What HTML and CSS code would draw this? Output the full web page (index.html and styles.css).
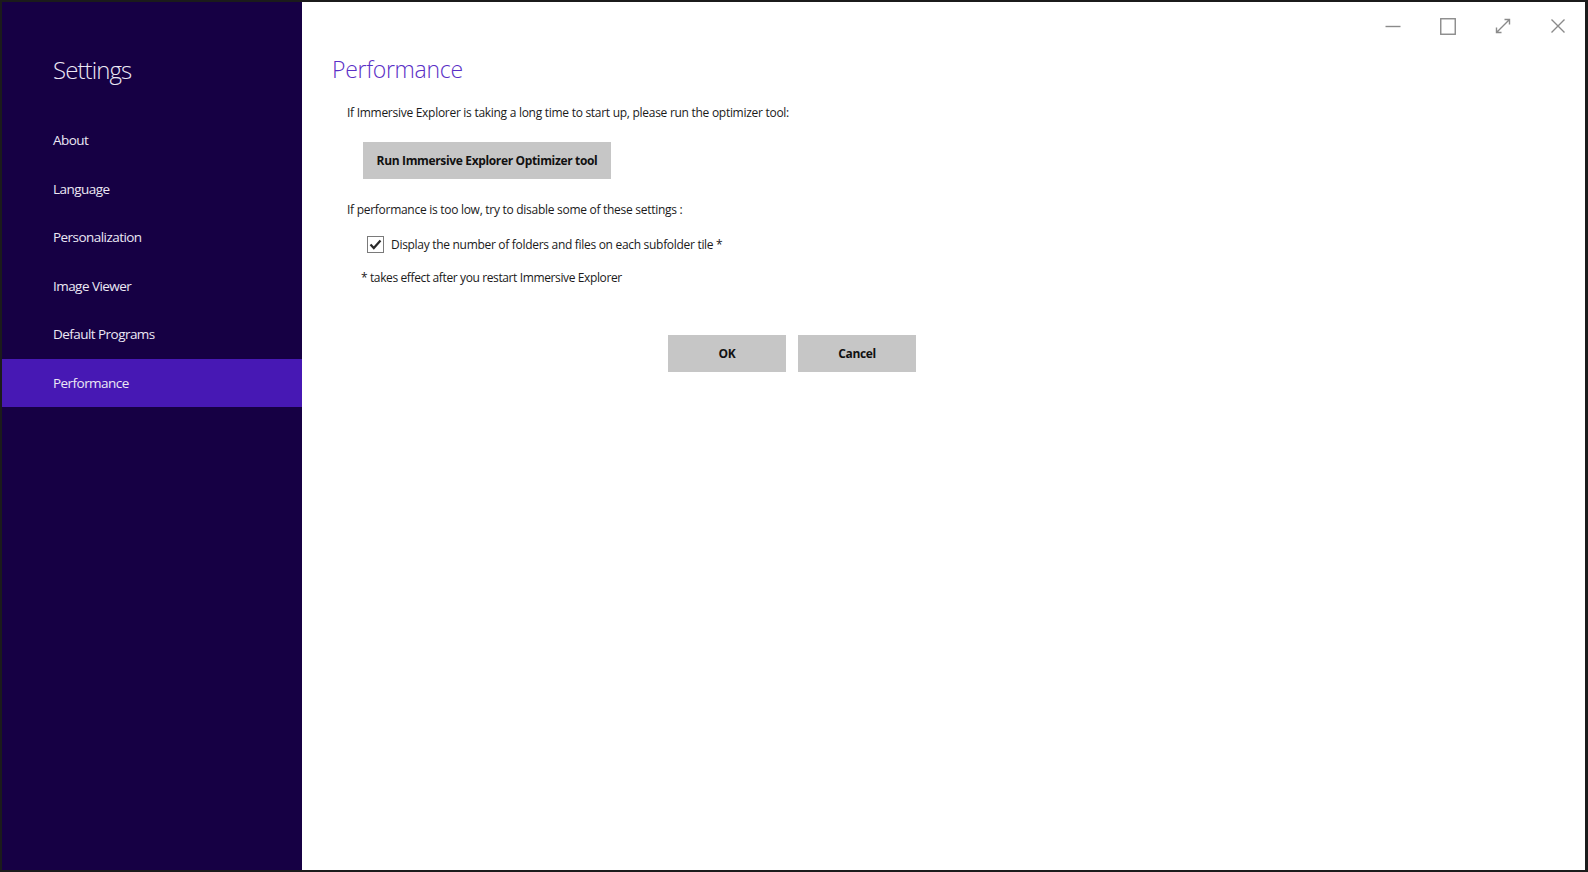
FILE: index.html
```html
<!DOCTYPE html>
<html lang="en">
<head>
    <meta charset="UTF-8">
    <title>Settings</title>
    <link rel="stylesheet" href="styles.css">
</head>
<body>
    <div class="window">
        <aside class="sidebar">
            <h1>Settings</h1>
            <ul class="nav">
                <li>About</li>
                <li>Language</li>
                <li>Personalization</li>
                <li>Image Viewer</li>
                <li>Default Programs</li>
                <li class="active">Performance</li>
            </ul>
        </aside>

        <main class="content">
            <div class="titlebar">
                <button class="ctrl" title="Minimize">
                    <svg width="16" height="16" viewBox="0 0 16 16"><path d="M0.5 8.5H15.5" /></svg>
                </button>
                <button class="ctrl" title="Maximize">
                    <svg width="16" height="17" viewBox="0 0 16 17"><rect x="0.75" y="0.75" width="14.5" height="15.5" /></svg>
                </button>
                <button class="ctrl" title="Full screen">
                    <svg width="16" height="16" viewBox="0 0 16 16"><path d="M1.5 14.5L14.5 1.5M9.5 1.5H14.5V6.5M1.5 9.5V14.5H6.5" /></svg>
                </button>
                <button class="ctrl" title="Close">
                    <svg width="16" height="16" viewBox="0 0 16 16"><path d="M1.5 1.5L14.5 14.5M14.5 1.5L1.5 14.5" /></svg>
                </button>
            </div>

            <h2>Performance</h2>

            <p class="intro">If Immersive Explorer is taking a long time to start up, please run the optimizer tool:</p>

            <div class="optimizer">
                <button class="btn btn-wide">Run Immersive Explorer Optimizer tool</button>
            </div>

            <p class="intro second">If performance is too low, try to disable some of these settings :</p>

            <label class="check">
                <span class="box">
                    <svg width="13" height="11" viewBox="0 0 13 11"><path d="M1.5 5.5L4.8 9L11.5 1.5" /></svg>
                </span>
                Display the number of folders and files on each subfolder tile *
            </label>

            <p class="note">* takes effect after you restart Immersive Explorer</p>

            <div class="actions">
                <button class="btn">OK</button>
                <button class="btn">Cancel</button>
            </div>
        </main>
    </div>
</body>
</html>
```

FILE: styles.css
```css
* {
    margin: 0;
    padding: 0;
    box-sizing: border-box;
}

body {
    font-family: "Open Sans", "Noto Sans", sans-serif;
    background: #1b1b1b;
    color: #1a1a1a;
}

.window {
    display: flex;
    height: 872px;
    border: 2px solid #1b1b1b;
    border-right-width: 3px;
}

/* left navigation */
.sidebar {
    width: 300px;
    background: #160044;
    color: #ece8f4;
}

.sidebar h1 {
    font-weight: 300;
    font-size: 24px;
    line-height: 32px;
    letter-spacing: -0.9px;
    margin: 52px 0 0 51px;
}

.nav {
    list-style: none;
    margin-top: 30px;
}

.nav li {
    height: 48.5px;
    display: flex;
    align-items: center;
    padding: 0 0 0 51px;
    font-size: 13.5px;
    letter-spacing: -0.55px;
}

.nav li.active {
    background: #4718b4;
}

/* right pane */
.content {
    flex: 1;
    background: #fff;
    padding-left: 30px;
}

.titlebar {
    display: flex;
    justify-content: flex-end;
    height: 50px;
}

.ctrl {
    width: 55px;
    height: 48px;
    border: none;
    background: none;
    display: flex;
    align-items: center;
    justify-content: center;
}

.ctrl svg {
    fill: none;
    stroke: #8a8a8a;
    stroke-width: 1.4;
}

h2 {
    font-weight: 300;
    font-size: 23px;
    line-height: 28px;
    color: #5a2fc6;
    letter-spacing: -0.3px;
    margin-top: 3px;
}

.intro {
    font-size: 12px;
    line-height: 16px;
    letter-spacing: -0.28px;
    margin: 22px 0 0 15px;
}

.intro.second {
    margin-top: 23px;
}

.optimizer {
    margin: 21px 0 0 31px;
    width: 248px;
}

.btn {
    font-family: inherit;
    font-weight: 700;
    font-size: 12px;
    letter-spacing: -0.35px;
    color: #111;
    background: #c6c6c6;
    border: none;
    height: 37px;
    width: 118px;
}

.btn-wide {
    width: 248px;
}

.check {
    display: flex;
    align-items: center;
    gap: 7px;
    margin: 18px 0 0 35px;
    font-size: 12px;
    line-height: 17px;
    letter-spacing: -0.3px;
}

.box {
    width: 17px;
    height: 17px;
    border: 1px solid #7a7a7a;
    display: flex;
    align-items: center;
    justify-content: center;
}

.box svg {
    fill: none;
    stroke: #2a2a2a;
    stroke-width: 2.2;
}

.note {
    font-size: 12px;
    line-height: 16px;
    letter-spacing: -0.38px;
    margin: 17px 0 0 29px;
}

.actions {
    display: flex;
    gap: 12px;
    margin: 49px 0 0 336px;
}
```
